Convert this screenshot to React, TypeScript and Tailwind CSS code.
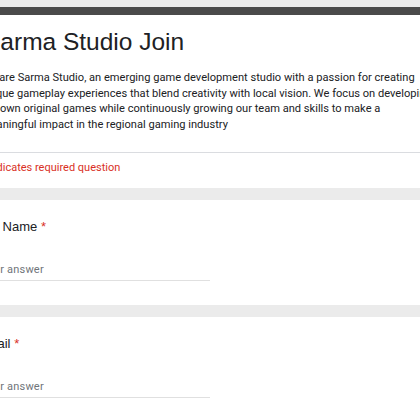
import React from 'react';

const descLines = [
  'We are Sarma Studio, an emerging game development studio with a passion for creating',
  'unique gameplay experiences that blend creativity with local vision. We focus on developing',
  'our own original games while continuously growing our team and skills to make a',
  'meaningful impact in the regional gaming industry',
];

const Question: React.FC<{ label: string }> = ({ label }) => (
  <div className="bg-white pl-[21px] pr-6 pt-[18px] pb-[24px]">
    <div className="ml-[-3px] text-[13px] leading-[18px] text-[#202124] font-['Liberation_Sans',Arial,sans-serif] whitespace-nowrap">
      {label} <span className="text-[#d93025]">*</span>
    </div>
    <div className="mt-[24px] w-[229px] h-[21px] border-b border-[#e0e0e0] flex items-center">
      <span className="text-[11px] tracking-[0.2px] text-[#70757a] font-['Roboto',sans-serif] whitespace-nowrap">
        Your answer
      </span>
    </div>
  </div>
);

const App: React.FC = () => {
  return (
    <div className="min-h-screen bg-[#ebebeb] overflow-hidden pt-[7px]">
      <div className="ml-[-40px] w-[560px] flex flex-col gap-[12px]">
        {/* Title card */}
        <div className="bg-white border-t-[8px] border-[#4a4a4a]">
          <div className="px-6 pt-[12px] pb-[20px]">
            <h1 className="text-[24.5px] leading-[30px] text-[#202124] font-['Liberation_Sans',Arial,sans-serif] whitespace-nowrap">
              Sarma Studio Join
            </h1>
            <p className="mt-[13px] ml-[-3px] text-[11.1px] leading-[15.5px] text-[#202124] font-['Roboto',sans-serif] whitespace-nowrap">
              {descLines.map((l, i) => (
                <span key={i} className="block">
                  {l}
                </span>
              ))}
            </p>
          </div>
          <div className="border-t border-[#dadce0]" />
          <div className="pl-5 pr-6 pt-[7px] pb-[13px] text-[11px] leading-[15px] text-[#d93025] font-['Roboto',sans-serif] whitespace-nowrap">
            * Indicates required question
          </div>
        </div>

        <Question label="Full Name" />
        <Question label="Email" />
      </div>
    </div>
  );
};

export default App;
